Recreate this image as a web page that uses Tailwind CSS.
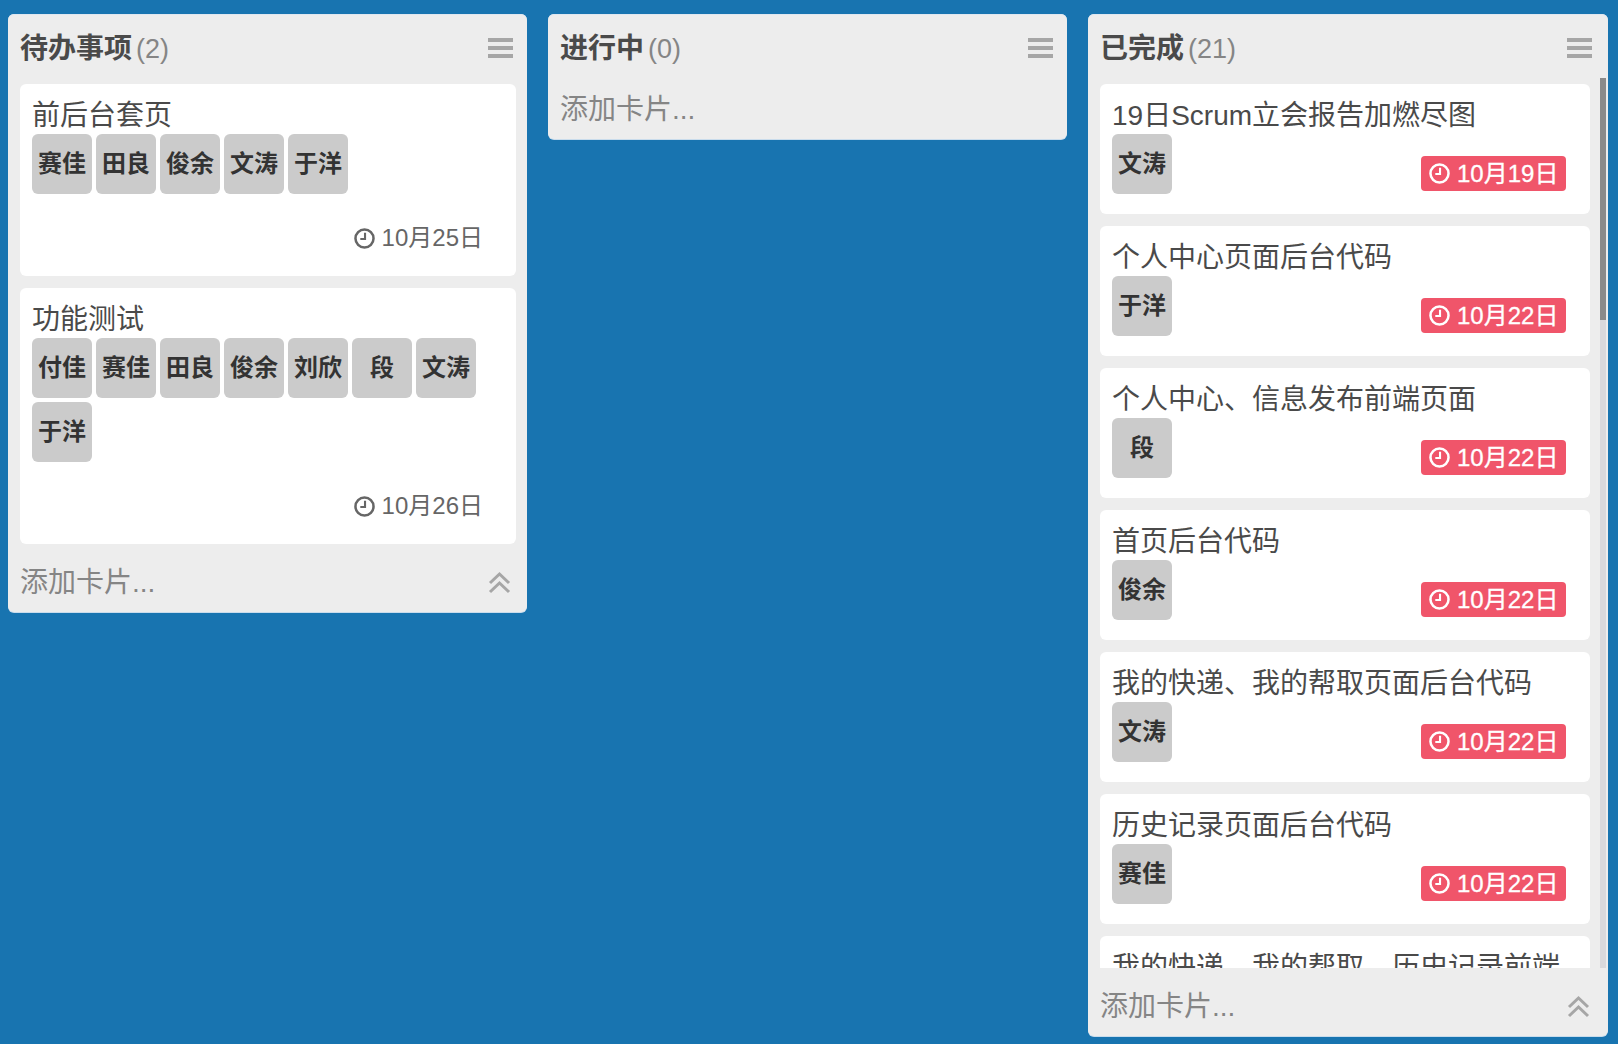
<!DOCTYPE html>
<html lang="zh">
<head>
<meta charset="utf-8">
<script src="https://cdn.jsdelivr.net/npm/@tailwindcss/browser@4"></script>
</head>
<body class="m-0 h-[1044px] w-[1618px] overflow-hidden bg-[#1874b0] font-['Liberation_Sans','Noto_Sans_CJK_SC',sans-serif] text-[#4a4a4a]">
<div class="flex items-start gap-[21px] pl-2 pt-[14px]">

  <section class="w-[519px] rounded-[6px] bg-[#ededed] shadow-[0_1px_0_#c9dcec,inset_0_1px_0_#dfe7f0]">
    <header class="flex h-[62px] items-center justify-between pl-3 pr-[14px]">
      <h2 class="pt-[8px] text-[28px] leading-[34px]"><b class="font-bold">待办事项</b><span class="ml-[4px] text-[27px] text-[#858585]">(2)</span></h2>
      <svg class="mt-[6px]" width="25" height="20" viewBox="0 0 25 20" fill="#a6a6a6"><rect width="25" height="4" y="0"/><rect width="25" height="4" y="8"/><rect width="25" height="4" y="16"/></svg>
    </header>
    <div class="flex flex-col gap-3 pl-3 pr-[11px] pt-2">
      <article class="h-[192px] rounded-[6px] bg-white px-3">
        <h3 class="h-[50px] pt-[14px] text-[28px] leading-[36px]">前后台套页</h3>
        <div class="flex flex-wrap gap-1">
          <span class="flex h-[60px] w-[60px] items-center justify-center rounded-[6px] bg-[#cbcbcb] text-[24px] font-bold text-[#333]">赛佳</span>
          <span class="flex h-[60px] w-[60px] items-center justify-center rounded-[6px] bg-[#cbcbcb] text-[24px] font-bold text-[#333]">田良</span>
          <span class="flex h-[60px] w-[60px] items-center justify-center rounded-[6px] bg-[#cbcbcb] text-[24px] font-bold text-[#333]">俊余</span>
          <span class="flex h-[60px] w-[60px] items-center justify-center rounded-[6px] bg-[#cbcbcb] text-[24px] font-bold text-[#333]">文涛</span>
          <span class="flex h-[60px] w-[60px] items-center justify-center rounded-[6px] bg-[#cbcbcb] text-[24px] font-bold text-[#333]">于洋</span>
        </div>
        <div class="mt-[28px] flex h-[32px] items-center justify-end gap-[7px] pr-[21px] text-[24px] text-[#666]">
          <svg width="21" height="21" viewBox="0 0 20 20" fill="none" stroke="#666" stroke-width="2.4"><circle cx="10" cy="10" r="8.6"/><path d="M10.5 4.5v6h-4.5" stroke-width="2"/></svg>
          <span>10月25日</span>
        </div>
      </article>
      <article class="h-[256px] rounded-[6px] bg-white px-3">
        <h3 class="h-[50px] pt-[14px] text-[28px] leading-[36px]">功能测试</h3>
        <div class="flex flex-wrap gap-1">
          <span class="flex h-[60px] w-[60px] items-center justify-center rounded-[6px] bg-[#cbcbcb] text-[24px] font-bold text-[#333]">付佳</span>
          <span class="flex h-[60px] w-[60px] items-center justify-center rounded-[6px] bg-[#cbcbcb] text-[24px] font-bold text-[#333]">赛佳</span>
          <span class="flex h-[60px] w-[60px] items-center justify-center rounded-[6px] bg-[#cbcbcb] text-[24px] font-bold text-[#333]">田良</span>
          <span class="flex h-[60px] w-[60px] items-center justify-center rounded-[6px] bg-[#cbcbcb] text-[24px] font-bold text-[#333]">俊余</span>
          <span class="flex h-[60px] w-[60px] items-center justify-center rounded-[6px] bg-[#cbcbcb] text-[24px] font-bold text-[#333]">刘欣</span>
          <span class="flex h-[60px] w-[60px] items-center justify-center rounded-[6px] bg-[#cbcbcb] text-[24px] font-bold text-[#333]">段</span>
          <span class="flex h-[60px] w-[60px] items-center justify-center rounded-[6px] bg-[#cbcbcb] text-[24px] font-bold text-[#333]">文涛</span>
          <span class="flex h-[60px] w-[60px] items-center justify-center rounded-[6px] bg-[#cbcbcb] text-[24px] font-bold text-[#333]">于洋</span>
        </div>
        <div class="mt-[28px] flex h-[32px] items-center justify-end gap-[7px] pr-[21px] text-[24px] text-[#666]">
          <svg width="21" height="21" viewBox="0 0 20 20" fill="none" stroke="#666" stroke-width="2.4"><circle cx="10" cy="10" r="8.6"/><path d="M10.5 4.5v6h-4.5" stroke-width="2"/></svg>
          <span>10月26日</span>
        </div>
      </article>
    </div>
    <footer class="flex h-[68px] items-center justify-between pl-3 pr-[16px]">
      <span class="pt-[10px] text-[28px] leading-[36px] text-[#858585]">添加卡片...</span>
      <svg class="mt-[8px]" width="23" height="23" viewBox="0 0 23 23" fill="none" stroke="#a6a6a6" stroke-width="3"><path d="M2 12 11.500 3l9.500 9M2 21l9.500-9 9.500 9"/></svg>
    </footer>
  </section>

  <section class="w-[519px] rounded-[6px] bg-[#ededed] shadow-[0_1px_0_#c9dcec,inset_0_1px_0_#dfe7f0]">
    <header class="flex h-[62px] items-center justify-between pl-3 pr-[14px]">
      <h2 class="pt-[8px] text-[28px] leading-[34px]"><b class="font-bold">进行中</b><span class="ml-[4px] text-[27px] text-[#858585]">(0)</span></h2>
      <svg class="mt-[6px]" width="25" height="20" viewBox="0 0 25 20" fill="#a6a6a6"><rect width="25" height="4" y="0"/><rect width="25" height="4" y="8"/><rect width="25" height="4" y="16"/></svg>
    </header>
    <footer class="flex h-[63px] items-center pl-3">
      <span class="pt-[4px] text-[28px] leading-[36px] text-[#858585]">添加卡片...</span>
    </footer>
  </section>

  <section class="relative flex h-[1022px] w-[520px] flex-col overflow-hidden rounded-[6px] bg-[#ededed] shadow-[0_1px_0_#c9dcec,inset_0_1px_0_#dfe7f0]">
    <header class="flex h-[62px] shrink-0 items-center justify-between pl-3 pr-[16px]">
      <h2 class="pt-[8px] text-[28px] leading-[34px]"><b class="font-bold">已完成</b><span class="ml-[4px] text-[27px] text-[#858585]">(21)</span></h2>
      <svg class="mt-[6px]" width="25" height="20" viewBox="0 0 25 20" fill="#a6a6a6"><rect width="25" height="4" y="0"/><rect width="25" height="4" y="8"/><rect width="25" height="4" y="16"/></svg>
    </header>
    <div class="relative min-h-0 flex-1">
      <div class="flex h-full flex-col gap-3 overflow-hidden pl-3 pr-[18px] pt-2">
        <article class="flex h-[130px] shrink-0 flex-col rounded-[6px] bg-white px-3">
          <h3 class="h-[50px] shrink-0 pt-[14px] text-[28px] leading-[36px]">19日Scrum立会报告加燃尽图</h3>
          <div class="flex items-start justify-between pr-[12px]">
            <span class="flex h-[60px] w-[60px] items-center justify-center rounded-[6px] bg-[#cbcbcb] text-[24px] font-bold text-[#333]">文涛</span>
            <span class="mt-[22px] flex h-[35px] w-[145px] items-center gap-[7px] rounded-[4px] bg-[#f0556a] pl-[8px] text-[24px] text-white [-webkit-text-stroke:0.3px_white]"><svg width="21" height="21" viewBox="0 0 20 20" fill="none" stroke="#fff" stroke-width="2.4"><circle cx="10" cy="10" r="8.6"/><path d="M10.5 4.5v6h-4.5" stroke-width="2"/></svg>10月19日</span>
          </div>
        </article>
        <article class="flex h-[130px] shrink-0 flex-col rounded-[6px] bg-white px-3">
          <h3 class="h-[50px] shrink-0 pt-[14px] text-[28px] leading-[36px]">个人中心页面后台代码</h3>
          <div class="flex items-start justify-between pr-[12px]">
            <span class="flex h-[60px] w-[60px] items-center justify-center rounded-[6px] bg-[#cbcbcb] text-[24px] font-bold text-[#333]">于洋</span>
            <span class="mt-[22px] flex h-[35px] w-[145px] items-center gap-[7px] rounded-[4px] bg-[#f0556a] pl-[8px] text-[24px] text-white [-webkit-text-stroke:0.3px_white]"><svg width="21" height="21" viewBox="0 0 20 20" fill="none" stroke="#fff" stroke-width="2.4"><circle cx="10" cy="10" r="8.6"/><path d="M10.5 4.5v6h-4.5" stroke-width="2"/></svg>10月22日</span>
          </div>
        </article>
        <article class="flex h-[130px] shrink-0 flex-col rounded-[6px] bg-white px-3">
          <h3 class="h-[50px] shrink-0 pt-[14px] text-[28px] leading-[36px]">个人中心、信息发布前端页面</h3>
          <div class="flex items-start justify-between pr-[12px]">
            <span class="flex h-[60px] w-[60px] items-center justify-center rounded-[6px] bg-[#cbcbcb] text-[24px] font-bold text-[#333]">段</span>
            <span class="mt-[22px] flex h-[35px] w-[145px] items-center gap-[7px] rounded-[4px] bg-[#f0556a] pl-[8px] text-[24px] text-white [-webkit-text-stroke:0.3px_white]"><svg width="21" height="21" viewBox="0 0 20 20" fill="none" stroke="#fff" stroke-width="2.4"><circle cx="10" cy="10" r="8.6"/><path d="M10.5 4.5v6h-4.5" stroke-width="2"/></svg>10月22日</span>
          </div>
        </article>
        <article class="flex h-[130px] shrink-0 flex-col rounded-[6px] bg-white px-3">
          <h3 class="h-[50px] shrink-0 pt-[14px] text-[28px] leading-[36px]">首页后台代码</h3>
          <div class="flex items-start justify-between pr-[12px]">
            <span class="flex h-[60px] w-[60px] items-center justify-center rounded-[6px] bg-[#cbcbcb] text-[24px] font-bold text-[#333]">俊余</span>
            <span class="mt-[22px] flex h-[35px] w-[145px] items-center gap-[7px] rounded-[4px] bg-[#f0556a] pl-[8px] text-[24px] text-white [-webkit-text-stroke:0.3px_white]"><svg width="21" height="21" viewBox="0 0 20 20" fill="none" stroke="#fff" stroke-width="2.4"><circle cx="10" cy="10" r="8.6"/><path d="M10.5 4.5v6h-4.5" stroke-width="2"/></svg>10月22日</span>
          </div>
        </article>
        <article class="flex h-[130px] shrink-0 flex-col rounded-[6px] bg-white px-3">
          <h3 class="h-[50px] shrink-0 pt-[14px] text-[28px] leading-[36px]">我的快递、我的帮取页面后台代码</h3>
          <div class="flex items-start justify-between pr-[12px]">
            <span class="flex h-[60px] w-[60px] items-center justify-center rounded-[6px] bg-[#cbcbcb] text-[24px] font-bold text-[#333]">文涛</span>
            <span class="mt-[22px] flex h-[35px] w-[145px] items-center gap-[7px] rounded-[4px] bg-[#f0556a] pl-[8px] text-[24px] text-white [-webkit-text-stroke:0.3px_white]"><svg width="21" height="21" viewBox="0 0 20 20" fill="none" stroke="#fff" stroke-width="2.4"><circle cx="10" cy="10" r="8.6"/><path d="M10.5 4.5v6h-4.5" stroke-width="2"/></svg>10月22日</span>
          </div>
        </article>
        <article class="flex h-[130px] shrink-0 flex-col rounded-[6px] bg-white px-3">
          <h3 class="h-[50px] shrink-0 pt-[14px] text-[28px] leading-[36px]">历史记录页面后台代码</h3>
          <div class="flex items-start justify-between pr-[12px]">
            <span class="flex h-[60px] w-[60px] items-center justify-center rounded-[6px] bg-[#cbcbcb] text-[24px] font-bold text-[#333]">赛佳</span>
            <span class="mt-[22px] flex h-[35px] w-[145px] items-center gap-[7px] rounded-[4px] bg-[#f0556a] pl-[8px] text-[24px] text-white [-webkit-text-stroke:0.3px_white]"><svg width="21" height="21" viewBox="0 0 20 20" fill="none" stroke="#fff" stroke-width="2.4"><circle cx="10" cy="10" r="8.6"/><path d="M10.5 4.5v6h-4.5" stroke-width="2"/></svg>10月22日</span>
          </div>
        </article>
        <article class="flex h-[130px] shrink-0 flex-col rounded-[6px] bg-white px-3">
          <h3 class="h-[50px] shrink-0 pt-[14px] text-[28px] leading-[36px]">我的快递、我的帮取、历史记录前端</h3>
        </article>
      </div>
      <div class="absolute bottom-0 right-[2px] top-[2px] w-[6px] bg-[#d9d9dc]"><div class="h-[242px] w-full bg-[#8a8a8a]"></div></div>
    </div>
    <footer class="flex h-[68px] shrink-0 items-center justify-between pl-3 pr-[18px]">
      <span class="pt-[10px] text-[28px] leading-[36px] text-[#858585]">添加卡片...</span>
      <svg class="mt-[8px]" width="23" height="23" viewBox="0 0 23 23" fill="none" stroke="#a6a6a6" stroke-width="3"><path d="M2 12 11.500 3l9.500 9M2 21l9.500-9 9.500 9"/></svg>
    </footer>
  </section>
</div>
</body>
</html>
